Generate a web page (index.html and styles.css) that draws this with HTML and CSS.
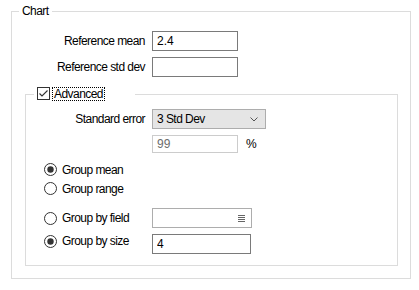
FILE: index.html
```html
<!DOCTYPE html>
<html lang="en">
  <head>
    <meta charset="UTF-8" />
    <title>Chart</title>
    <link rel="stylesheet" href="styles.css">
  </head>
  <body>
    <fieldset class="group outer">
      <legend class="title">Chart</legend>
      <div class="row">
        <label class="lbl">Reference mean</label>
        <input class="field" type="text" value="2.4">
      </div>
      <div class="row gap">
        <label class="lbl">Reference std dev</label>
        <input class="field" type="text" value="">
      </div>

      <fieldset class="group inner">
        <legend class="toggle">
          <svg class="tick" width="13" height="13" viewBox="0 0 13 13">
            <rect x="0.5" y="0.5" width="12" height="12" fill="#fff" stroke="#333"/>
            <polyline points="2.5,6.5 5,9 10.5,3.5" fill="none" stroke="#333" stroke-width="1.1"/>
          </svg>
          <span class="focus">Advanced</span>
        </legend>

        <div class="row">
          <label class="lbl sub">Standard error</label>
          <div class="combo">
            <span>3 Std Dev</span>
            <svg width="8" height="5" viewBox="0 0 8 5">
              <polyline points="0.5,0.5 4,4 7.5,0.5" fill="none" stroke="#555"/>
            </svg>
          </div>
        </div>
        <div class="row gap">
          <span class="lbl sub"></span>
          <input class="field disabled" type="text" value="99" disabled>
          <span class="unit">%</span>
        </div>

        <div class="radios">
          <label class="radio">
            <svg width="13" height="13" viewBox="0 0 13 13">
              <circle cx="6.5" cy="6.5" r="6" fill="#fff" stroke="#333"/>
              <circle cx="6.5" cy="6.5" r="3.2" fill="#333"/>
            </svg>
            Group mean
          </label>
          <label class="radio">
            <svg width="13" height="13" viewBox="0 0 13 13">
              <circle cx="6.5" cy="6.5" r="6" fill="#fff" stroke="#333"/>
            </svg>
            Group range
          </label>
        </div>

        <div class="row top by-field">
          <label class="radio choice shift">
            <svg width="13" height="13" viewBox="0 0 13 13">
              <circle cx="6.5" cy="6.5" r="6" fill="#fff" stroke="#333"/>
            </svg>
            Group by field
          </label>
          <div class="picker">
            <svg width="7" height="9" viewBox="0 0 7 9">
              <path d="M0 1.5h7M0 3.5h7M0 5.5h7M0 7.5h7" stroke="#666" stroke-width="1"/>
            </svg>
          </div>
        </div>
        <div class="row top gap">
          <label class="radio choice">
            <svg width="13" height="13" viewBox="0 0 13 13">
              <circle cx="6.5" cy="6.5" r="6" fill="#fff" stroke="#333"/>
              <circle cx="6.5" cy="6.5" r="3.2" fill="#333"/>
            </svg>
            Group by size
          </label>
          <input class="field size" type="text" value="4">
        </div>
      </fieldset>
    </fieldset>
  </body>
</html>
```

FILE: styles.css
```css
/* Base */
* {
  box-sizing: border-box;
}
body {
  margin: 0;
  background: #fff;
  color: #000;
  font-family: "Liberation Sans", Arial, sans-serif;
  font-size: 12px;
  letter-spacing: -0.55px;
}

/* Group boxes */
.group {
  margin: 0;
  padding: 0;
  min-width: 0;
  border: 1px solid #dcdcdc;
}
.outer {
  margin: 4px 0 0 11px;
  width: 400px;
  padding: 13px 0 12px 0;
}
.title {
  margin-left: 7px;
  padding: 0 3px;
  line-height: 14px;
}
.inner {
  margin: 10px 0 0 13px;
  width: 373px;
  padding: 8px 0 11px 0;
}
.toggle {
  margin-left: 8px;
  padding: 0 30px 0 3px;
  height: 14px;
  line-height: 12px;
  display: flex;
  align-items: flex-start;
}
.tick {
  display: block;
  flex: none;
}
.focus {
  margin-left: 2px;
  padding: 0 1px;
  height: 14px;
  border: 1px dotted #000;
}

/* Rows */
.row {
  display: flex;
  align-items: center;
  gap: 7px;
}
.row.top {
  align-items: flex-start;
}
.gap {
  margin-top: 6px;
}
.by-field {
  margin-top: 10px;
}
.lbl {
  width: 133px;
  text-align: right;
}
.lbl.sub {
  width: 119px;
}

/* Controls */
.field {
  width: 86px;
  height: 20px;
  margin: 0;
  padding: 0 4px;
  border: 1px solid #7a7a7a;
  border-radius: 0;
  background: #fff;
  font: inherit;
  color: #000;
  outline: none;
}
.field.disabled {
  height: 18px;
  border-color: #cccccc;
  color: #6d6d6d;
}
.field.size {
  width: 99px;
}
.unit {
  padding-left: 1px;
}
.combo {
  width: 114px;
  height: 20px;
  padding: 0 7px 0 4px;
  display: flex;
  align-items: center;
  justify-content: space-between;
  background: #e5e5e5;
  border: 1px solid #adadad;
}
.picker {
  width: 100px;
  height: 20px;
  padding-right: 6px;
  display: flex;
  align-items: center;
  justify-content: flex-end;
  border: 1px solid #adadad;
  background: #fff;
}

/* Radio buttons */
.radios {
  margin-top: 7px;
}
.radio {
  display: flex;
  align-items: center;
  gap: 5px;
  height: 19px;
  padding-left: 18px;
}
.radio svg {
  flex: none;
}
.radio.choice {
  width: 119px;
  height: 14px;
}
.radio.shift {
  margin-top: 3px;
}
```
